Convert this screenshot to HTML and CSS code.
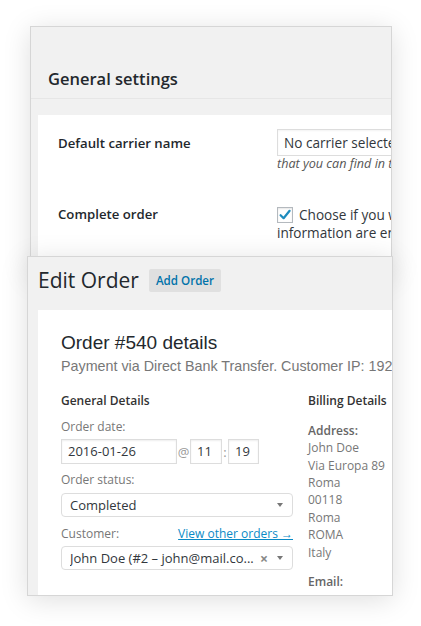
FILE: index.html
```html
<!DOCTYPE html>
<html>
<head>
<meta charset="utf-8">
<link rel="stylesheet" href="styles.css">
</head>
<body>
<div class="desk">
  <section class="win win-settings">
    <div class="settings-head"><h2 class="settings-title">General settings</h2></div>
    <div class="settings-panel">
      <div class="form-row row-carrier">
        <div class="row-label">Default carrier name</div>
        <div class="row-field">
          <div class="select-box">No carrier selected</div>
          <p class="desc">that you can find in the tracking page</p>
        </div>
      </div>
      <div class="form-row row-complete">
        <div class="row-label">Complete order</div>
        <div class="row-field">
          <div class="check-line">
            <span class="checkbox"><svg viewBox="0 0 16 16" width="16" height="16"><path d="M3.6 8.2 L6.6 11.2 L12.6 3.8" fill="none" stroke="#1e8cbe" stroke-width="2.2" stroke-linecap="round" stroke-linejoin="round"/></svg></span>
            <span>Choose if you want to complete the order</span>
          </div>
          <div class="field-line">information are entered in the order</div>
        </div>
      </div>
    </div>
  </section>

  <section class="win win-order">
    <div class="order-head">
      <h1 class="order-title">Edit Order</h1>
      <span class="add-btn">Add Order</span>
    </div>
    <div class="order-panel">
      <h2 class="order-num">Order #540 details</h2>
      <p class="order-meta">Payment via Direct Bank Transfer. Customer IP: 192.168.1.1</p>
      <div class="order-cols">
        <div class="col-general">
          <h3 class="col-title">General Details</h3>
          <div class="field-label">Order date:</div>
          <div class="date-row">
            <span class="text-input in-date">2016-01-26</span>
            <span class="date-sep at">@</span>
            <span class="text-input in-hour">11</span>
            <span class="date-sep colon">:</span>
            <span class="text-input in-min">19</span>
          </div>
          <div class="field-label label-gap">Order status:</div>
          <div class="drop">
            <span class="drop-text">Completed</span>
            <span class="caret"></span>
          </div>
          <div class="field-label label-gap customer-line">
            <span>Customer:</span>
            <span class="view-link">View other orders →</span>
          </div>
          <div class="drop">
            <span class="drop-text">John Doe (#2 – john@mail.co...</span>
            <span class="clear">×</span>
            <span class="caret"></span>
          </div>
        </div>
        <div class="col-billing">
          <h3 class="col-title">Billing Details</h3>
          <p class="bill-key">Address:</p>
          <div class="bill-lines">
            <div>John Doe</div>
            <div>Via Europa 89</div>
            <div>Roma</div>
            <div>00118</div>
            <div>Roma</div>
            <div>ROMA</div>
            <div>Italy</div>
          </div>
          <p class="bill-key bill-email">Email:</p>
        </div>
      </div>
    </div>
  </section>
</div>
</body>
</html>
```

FILE: styles.css
```css
* { box-sizing: border-box; }
html, body { margin: 0; padding: 0; background: #fff; }
body { font-family: "Open Sans", "Liberation Sans", sans-serif; color: #32373c; }

.desk { position: relative; width: 421px; height: 626px; overflow: hidden; }

.win {
  position: absolute;
  background: #f1f1f1;
  border: 1px solid #d6d6d6;
  overflow: hidden;
  box-shadow: 0 4px 26px rgba(0,0,0,0.13);
}

/* ---------- settings window ---------- */
.win-settings { left: 30px; top: 26px; width: 362px; height: 250px; z-index: 1; }
.settings-head { padding: 40px 0 7px 17px; border-bottom: 1px solid #e6e6e6; }
.settings-title { margin: 0; font-size: 16.5px; line-height: 24px; font-weight: 600; color: #23282d; }
.settings-panel { margin: 16px 0 0 7px; background: #fff; height: 300px; padding: 14px 0 0 20px; overflow: hidden; }
.form-row { display: grid; grid-template-columns: 219px 400px; align-items: start; }
.row-complete { margin-top: 34px; }
.row-label { font-size: 13.2px; font-weight: 600; color: #23282d; white-space: nowrap; }
.row-carrier .row-label { padding-top: 4px; line-height: 20px; }
.row-complete .row-label { line-height: 17.5px; }
.row-field { font-size: 13.6px; color: #32373c; white-space: nowrap; }
.select-box {
  width: 240px; height: 27px; border: 1px solid #ddd; padding-left: 6px;
  line-height: 25px; font-size: 13.6px; color: #32373c;
  box-shadow: inset 0 1px 2px rgba(0,0,0,0.05);
}
.desc { margin: 0; font-size: 12.6px; line-height: 16px; font-style: italic; color: #555; }
.check-line { display: flex; align-items: center; gap: 6px; line-height: 17.5px; }
.field-line { line-height: 17.5px; }
.checkbox {
  width: 16px; height: 16px; border: 1px solid #b4b9be; background: #fff;
  box-shadow: inset 0 1px 2px rgba(0,0,0,0.1); display: flex; flex: none;
}
.checkbox svg { display: block; margin: -1px; }

/* ---------- order window ---------- */
.win-order { left: 27px; top: 256px; width: 366px; height: 340px; z-index: 2; }
.order-head { display: flex; align-items: center; gap: 10px; padding: 9px 0 0 10px; }
.order-title { margin: 0; font-size: 21px; line-height: 29px; font-weight: 400; color: #23282d; }
.add-btn {
  background: #e0e0e0; color: #0073aa; font-size: 11.6px; font-weight: 600;
  height: 23px; line-height: 23px; padding: 0 7px; border-radius: 2px;
}
.order-panel { margin: 15px 0 0 10px; background: #fff; height: 300px; padding: 21px 0 0 23px; overflow: hidden; }
.order-num { margin: 0; font-family: "Liberation Sans", Arial, sans-serif; font-size: 19px; line-height: 23px; font-weight: 400; color: #23282d; white-space: nowrap; }
.order-meta { margin: 2px 0 0; font-family: "Liberation Sans", Arial, sans-serif; font-size: 14.3px; line-height: 20px; color: #777; white-space: nowrap; }
.order-cols { display: flex; gap: 15px; margin-top: 16px; }
.col-general { width: 232px; flex: none; }
.col-billing { width: 200px; flex: none; }
.col-title { margin: 0; font-size: 12px; line-height: 18px; font-weight: 600; color: #333; white-space: nowrap; }
.field-label { margin-top: 8px; font-size: 12px; line-height: 18px; color: #777; }
.label-gap { margin-top: 7px; }
.customer-line { display: flex; justify-content: space-between; margin-top: 8px; }
.view-link { color: #0a8ac6; text-decoration: underline; }

.date-row { display: flex; align-items: center; margin-top: 3px; }
.text-input {
  height: 25px; border: 1px solid #ddd; padding-left: 6px;
  font-size: 13px; line-height: 23px; color: #32373c;
  box-shadow: inset 0 1px 2px rgba(0,0,0,0.07);
}
.in-date { width: 116px; }
.in-hour { width: 32px; }
.in-min { width: 31px; }
.date-sep { font-size: 13px; color: #999; text-align: center; }
.at { width: 13px; }
.colon { width: 6px; }

.drop {
  position: relative; display: flex; align-items: center; margin-top: 4px;
  height: 24px; border: 1px solid #ddd; border-radius: 4px; padding-left: 8px;
  font-size: 13px; color: #32373c;
}
.drop + .field-label { margin-top: 8px; }
.customer-line + .drop { margin-top: 3px; }
.drop-text { flex: 1; white-space: nowrap; overflow: hidden; }
.clear { color: #888; font-weight: 700; font-size: 14px; margin-right: 9px; }
.caret {
  width: 0; height: 0; margin-right: 9px;
  border-left: 3.5px solid transparent; border-right: 3.5px solid transparent;
  border-top: 4px solid #777;
}

.bill-key { margin: 11.8px 0 0; font-size: 12px; line-height: 17.4px; font-weight: 600; color: #666; }
.bill-lines { font-size: 12px; line-height: 17.4px; color: #777; }
.bill-email { margin-top: 12.3px; }
```
